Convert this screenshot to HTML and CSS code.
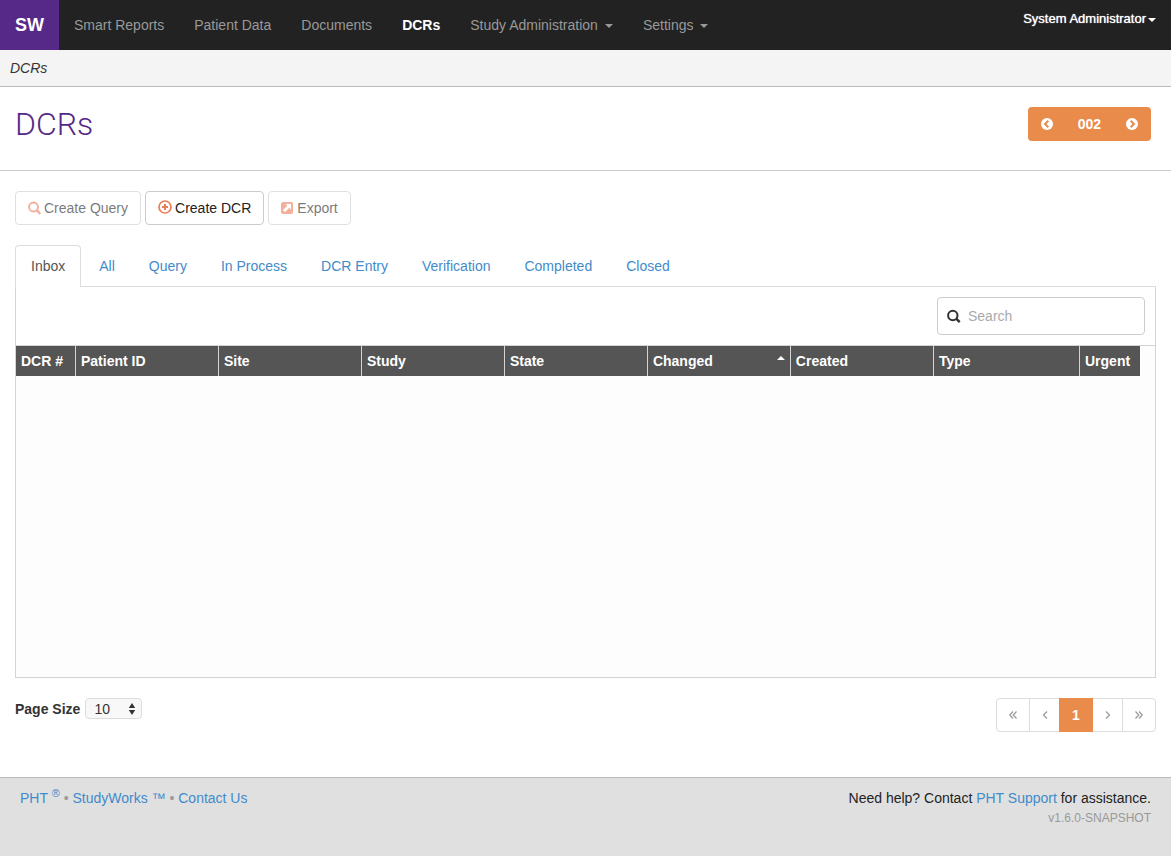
FILE: index.html
```html
<!DOCTYPE html>
<html lang="en">
<head>
<meta charset="utf-8">
<meta name="viewport" content="width=device-width, initial-scale=1">
<title>DCRs - StudyWorks</title>
<link rel="stylesheet" href="styles.css">
</head>
<body>
<header class="navbar">
  <a class="brand" href="#">SW</a>
  <nav class="nav">
    <a href="#">Smart Reports</a>
    <a href="#">Patient Data</a>
    <a href="#">Documents</a>
    <a href="#" class="current">DCRs</a>
    <a href="#">Study Administration<span class="caret"></span></a>
    <a href="#">Settings<span class="caret"></span></a>
  </nav>
  <a class="user" href="#">System Administrator<span class="caret"></span></a>
</header>
<div class="breadcrumb">DCRs</div>
<div class="page-head">
  <h1>DCRs</h1>
  <div class="site-switch">
    <button type="button" aria-label="Previous site"><svg width="12" height="12" viewBox="0 0 12 12"><circle cx="6" cy="6" r="6" fill="#fff"/><path d="M7.300 2.800 4.100 6l3.200 3.200" fill="none" stroke="#e98c4b" stroke-width="2"/></svg></button>
    <button type="button" class="site">002</button>
    <button type="button" aria-label="Next site"><svg width="12" height="12" viewBox="0 0 12 12"><circle cx="6" cy="6" r="6" fill="#fff"/><path d="M4.700 2.800 7.900 6 4.700 9.200" fill="none" stroke="#e98c4b" stroke-width="2"/></svg></button>
  </div>
</div>
<main class="content">
  <div class="toolbar">
    <button type="button" class="btn" disabled><svg width="13" height="14" viewBox="0 0 13 14" fill="none" stroke="#ec7d59"><circle cx="5.500" cy="6" r="4.500" stroke-width="1.900"/><path d="M8.700 9.200 12.300 13" stroke-width="2.400"/></svg>Create Query</button>
    <button type="button" class="btn"><svg class="raised" width="14" height="14" viewBox="0 0 14 14" fill="none" stroke="#ec7d59"><circle cx="7" cy="7" r="6" stroke-width="1.700"/><path d="M7 4v6M4 7h6" stroke-width="2"/></svg>Create DCR</button>
    <button type="button" class="btn" disabled><svg width="13" height="12" viewBox="0 0 13 12"><rect width="12" height="12" rx="2" fill="#ec7d59"/><path d="M4.500 2H10v5.500L8.200 5.700 4 10 2 8l4.300-4.200z" fill="#fff"/></svg>Export</button>
  </div>
  <nav class="tabs">
    <a href="#" class="active">Inbox</a>
    <a href="#">All</a>
    <a href="#">Query</a>
    <a href="#">In Process</a>
    <a href="#">DCR Entry</a>
    <a href="#">Verification</a>
    <a href="#">Completed</a>
    <a href="#">Closed</a>
  </nav>
  <section class="panel">
    <div class="filter">
      <label class="search"><svg width="14" height="14" viewBox="0 0 14 14" fill="none" stroke="#333"><circle cx="5.800" cy="6.500" r="4.700" stroke-width="2"/><path d="M9.200 9.700 12.700 13.200" stroke-width="2.400"/></svg><input type="search" placeholder="Search" aria-label="Search"></label>
    </div>
    <div class="grid">
      <table>
        <colgroup><col class="c-num"><col><col><col><col><col><col><col class="c-type"><col class="c-urgent"></colgroup>
        <thead>
          <tr><th>DCR #</th><th>Patient ID</th><th>Site</th><th>Study</th><th>State</th><th><span class="sorted">Changed<span class="asc"></span></span></th><th>Created</th><th>Type</th><th>Urgent</th></tr>
        </thead>
      </table>
    </div>
  </section>
  <div class="pager">
    <div class="page-size">
      <label for="size">Page Size</label>
      <span class="select"><select id="size"><option>10</option><option>25</option><option>50</option></select><svg width="8" height="14" viewBox="0 0 8 14" fill="#333"><path d="M4 1l3.200 5H.8zM4 13l3.200-5H.8z"/></svg></span>
    </div>
    <nav class="pages">
      <a class="wide" href="#" aria-label="First"><svg width="8" height="8" viewBox="0 0 8 8"><path d="M4 .5.800 4 4 7.500M7.500.5 4.300 4l3.200 3.500"/></svg></a>
      <a href="#" aria-label="Previous"><svg width="6" height="8" viewBox="0 0 6 8"><path d="M5 .5 1.500 4 5 7.500"/></svg></a>
      <a class="wide on" href="#">1</a>
      <a href="#" aria-label="Next"><svg width="6" height="8" viewBox="0 0 6 8"><path d="M1 .5 4.500 4 1 7.500"/></svg></a>
      <a class="last" href="#" aria-label="Last"><svg width="8" height="8" viewBox="0 0 8 8"><path d="M.5.500 3.700 4 .5 7.500M4 .5 7.200 4 4 7.500"/></svg></a>
    </nav>
  </div>
</main>
<footer class="footer">
  <div class="links"><a href="#">PHT <sup>®</sup></a> • <a href="#">StudyWorks ™</a> • <a href="#">Contact Us</a></div>
  <div class="help">
    <div>Need help? Contact <a href="#">PHT Support</a> for assistance.</div>
    <div class="version">v1.6.0-SNAPSHOT</div>
  </div>
</footer>
</body>
</html>
```
FILE: styles.css
```css
*, *::before, *::after { box-sizing: border-box; }
body {
  margin: 0;
  min-height: 100vh;
  display: flex;
  flex-direction: column;
  background: #fff;
  color: #333;
  font: 14px/20px "Helvetica Neue", "Liberation Sans", Arial, sans-serif;
}
a { color: #428bca; text-decoration: none; }
button, input, select { font: inherit; }
svg { flex: none; }

.navbar { display: flex; align-items: flex-start; min-height: 50px; background: #222; }
.brand { padding: 15px; color: #fff; background: #562988; font-size: 18px; font-weight: bold; }
.nav { display: flex; flex: 1; }
.nav a { padding: 15px; color: #999; white-space: nowrap; }
.nav .current { color: #fff; font-weight: bold; }
.caret {
  display: inline-block;
  margin-left: 7px;
  vertical-align: middle;
  border: 4px solid transparent;
  border-top-color: currentColor;
  border-bottom: 0;
}
.user { padding: 9px 15px; color: #fff; font-size: 13px; text-shadow: 0 0 1px #fff; white-space: nowrap; }
.user .caret { margin-left: 2px; }

.breadcrumb { padding: 8px 10px; background: #f4f4f4; border-bottom: 1px solid #bbb; font-style: italic; }
.page-head {
  display: flex;
  justify-content: space-between;
  align-items: flex-start;
  padding: 20px 20px 29px 15px;
  border-bottom: 1px solid #ccc;
}
h1 { margin: 0; color: #562988; font: 300 32px/34px Roboto, "Liberation Sans", sans-serif; }
.site-switch { display: flex; border-radius: 4px; overflow: hidden; background: #e98c4b; }
.site-switch button {
  display: flex;
  align-items: center;
  height: 34px;
  padding: 0 13px;
  border: 0;
  background: none;
  color: #fff;
}
.site-switch .site { padding: 0 12px; font-weight: bold; }

.content { flex: 1; padding: 20px 15px; }
.toolbar { display: flex; gap: 4px; margin-bottom: 20px; }
.btn {
  display: flex;
  align-items: center;
  gap: 3px;
  height: 34px;
  padding: 0 12px;
  border: 1px solid #ccc;
  border-radius: 4px;
  background: #fff;
  color: #222;
}
.btn:disabled { opacity: .6; }
.raised { margin-bottom: 2px; }

.tabs { display: flex; gap: 2px; border-bottom: 1px solid #ddd; }
.tabs a { padding: 11px 16px 10px; border-radius: 4px 4px 0 0; white-space: nowrap; }
.tabs .active {
  margin-bottom: -1px;
  padding: 10px 15px 11px;
  border: 1px solid #ddd;
  border-bottom: 0;
  background: #fff;
  color: #555;
}
.panel { border: 1px solid #d4d4d4; border-top: 0; }
.filter { display: flex; justify-content: flex-end; padding: 10px; }
.search {
  display: flex;
  align-items: center;
  gap: 7px;
  width: 208px;
  height: 38px;
  padding: 0 9px;
  border: 1px solid #ccc;
  border-radius: 4px;
}
.search input { flex: 1; min-width: 0; padding: 0; border: 0; outline: 0; background: none; }
.search input::placeholder { color: #aaa; opacity: 1; }
.grid { min-height: 332px; padding-right: 15px; border-top: 1px solid #d4d4d4; background: #fdfdfd; }
table { width: 100%; border-collapse: separate; border-spacing: 0; table-layout: fixed; }
.c-num { width: 60px; }
.c-type { width: 13%; }
.c-urgent { width: 60px; }
th {
  height: 30px;
  padding: 0 5px;
  border-right: 1px solid #d4d4d4;
  background: #555;
  color: #fff;
  text-align: left;
  white-space: nowrap;
}
th:last-child { border-right: 0; }
.sorted { display: flex; justify-content: space-between; }
.asc { height: 0; margin-top: 5px; border: 4px solid transparent; border-top: 0; border-bottom-color: #fff; }

.pager { display: flex; justify-content: space-between; align-items: flex-start; margin: 20px 0 25px; }
.page-size { display: flex; align-items: center; gap: 5px; font-weight: bold; }
.select { display: grid; align-items: center; }
.select > * { grid-area: 1 / 1; }
.select svg { justify-self: end; margin-right: 6px; pointer-events: none; }
select {
  appearance: none;
  width: 57px;
  height: 21px;
  padding: 0 8px;
  border: 1px solid #ddd;
  border-radius: 4px;
  background: #f8f8f8;
  color: #333;
  font-weight: normal;
}
.pages { display: flex; border: 1px solid #ddd; border-radius: 4px; }
.pages a {
  display: flex;
  align-items: center;
  justify-content: center;
  width: 30px;
  height: 32px;
  border-right: 1px solid #ddd;
}
.pages .wide { width: 33px; }
.pages .last { width: 32px; border-right: 0; }
.pages .on { width: 34px; height: 34px; margin: -1px 0 -1px -1px; border: 0; background: #e98c4b; color: #fff; font-weight: bold; }
.pages path { fill: none; stroke: #999; stroke-width: 1.2; }

.footer {
  display: flex;
  justify-content: space-between;
  min-height: 79px;
  padding: 10px 20px;
  border-top: 1px solid #bbb;
  background: #e0e0e0;
}
.links { color: #999; }
sup { font-size: 11px; line-height: 0; }
.help { text-align: right; color: #222; }
.version { color: #999; font-size: 12px; }
```
